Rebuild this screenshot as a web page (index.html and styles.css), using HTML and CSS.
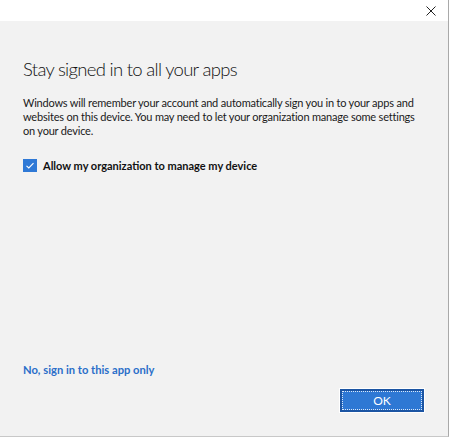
FILE: index.html
```html
<!DOCTYPE html>
<html>
<head>
<meta charset="utf-8">
<link rel="stylesheet" href="styles.css">
</head>
<body>
<div class="window">
  <div class="titlebar">
    <button class="close" aria-label="Close">
      <svg width="10" height="10" viewBox="0 0 10 10"><path d="M0.5 0.5L9.5 9.5M9.5 0.5L0.5 9.5" stroke="#222" stroke-width="1" fill="none"/></svg>
    </button>
  </div>
  <div class="content">
    <h1 class="title">Stay signed in to all your apps</h1>
    <p class="desc">Windows will remember your account and automatically sign you in to your apps and websites on this device. You may need to let your organization manage some settings on your device.</p>
    <label class="check">
      <span class="box">
        <svg width="14" height="13" viewBox="0 0 14 13"><path d="M3.5 6.8L5.8 9L10.5 4.2" stroke="#fff" stroke-width="1.1" fill="none"/></svg>
      </span>
      <span class="check-label">Allow my organization to manage my device</span>
    </label>
    <div class="spacer"></div>
    <a class="link" href="#">No, sign in to this app only</a>
    <div class="actions">
      <button class="ok"><span class="ok-inner">OK</span></button>
    </div>
  </div>
</div>
</body>
</html>
```
FILE: styles.css
```css
html, body {
  margin: 0;
  padding: 0;
  background: #ffffff;
}
body {
  width: 450px;
  height: 438px;
  font-family: "Lato", "Liberation Sans", sans-serif;
}
.window {
  width: 449px;
  height: 437px;
  box-sizing: border-box;
  border-right: 1px solid #a9a9a9;
  border-bottom: 1px solid #c8c8c8;
  display: flex;
  flex-direction: column;
}
.titlebar {
  height: 21px;
  background: #ffffff;
  display: flex;
  justify-content: flex-end;
  align-items: center;
  flex: none;
}
.close {
  border: 0;
  background: transparent;
  padding: 0;
  margin: 0 12px 0 0;
  width: 10px;
  height: 10px;
  display: flex;
}
.content {
  flex: 1;
  background: #f2f2f2;
  padding: 0 24px 0 23px;
  display: flex;
  flex-direction: column;
}
.title {
  margin: 35px 0 0 0;
  font-size: 18.5px;
  font-weight: 300;
  letter-spacing: -0.7px;
  line-height: 26px;
  color: #111;
}
.desc {
  margin: 14px 0 0 0;
  font-size: 11px;
  letter-spacing: -0.2px;
  line-height: 14px;
  color: #1a1a1a;
}
.check {
  margin-top: 21px;
  display: flex;
  align-items: center;
  gap: 6px;
}
.box {
  width: 14px;
  height: 13px;
  box-sizing: border-box;
  background: #2f79d6;
  display: flex;
}
.check-label {
  font-size: 11px;
  font-weight: 700;
  color: #111;
}
.spacer {
  flex: 1;
}
.link {
  font-size: 11.2px;
  font-weight: 700;
  color: #2a6ec9;
  text-decoration: none;
  align-self: flex-start;
}
.actions {
  display: flex;
  justify-content: flex-end;
  margin-top: 13px;
  margin-bottom: 24px;
}
.ok {
  width: 84px;
  height: 23px;
  box-sizing: border-box;
  background: #2e78d4;
  border: 2px solid #1c55a3;
  outline: 1px solid #ffffff;
  padding: 0;
  margin: 0;
  display: flex;
}
.ok-inner {
  flex: 1;
  border: 1px dotted #dbe8f8;
  color: #ffffff;
  font-family: "Lato", "Liberation Sans", sans-serif;
  font-size: 12px;
  display: flex;
  align-items: center;
  justify-content: center;
  line-height: 1;
}
```
